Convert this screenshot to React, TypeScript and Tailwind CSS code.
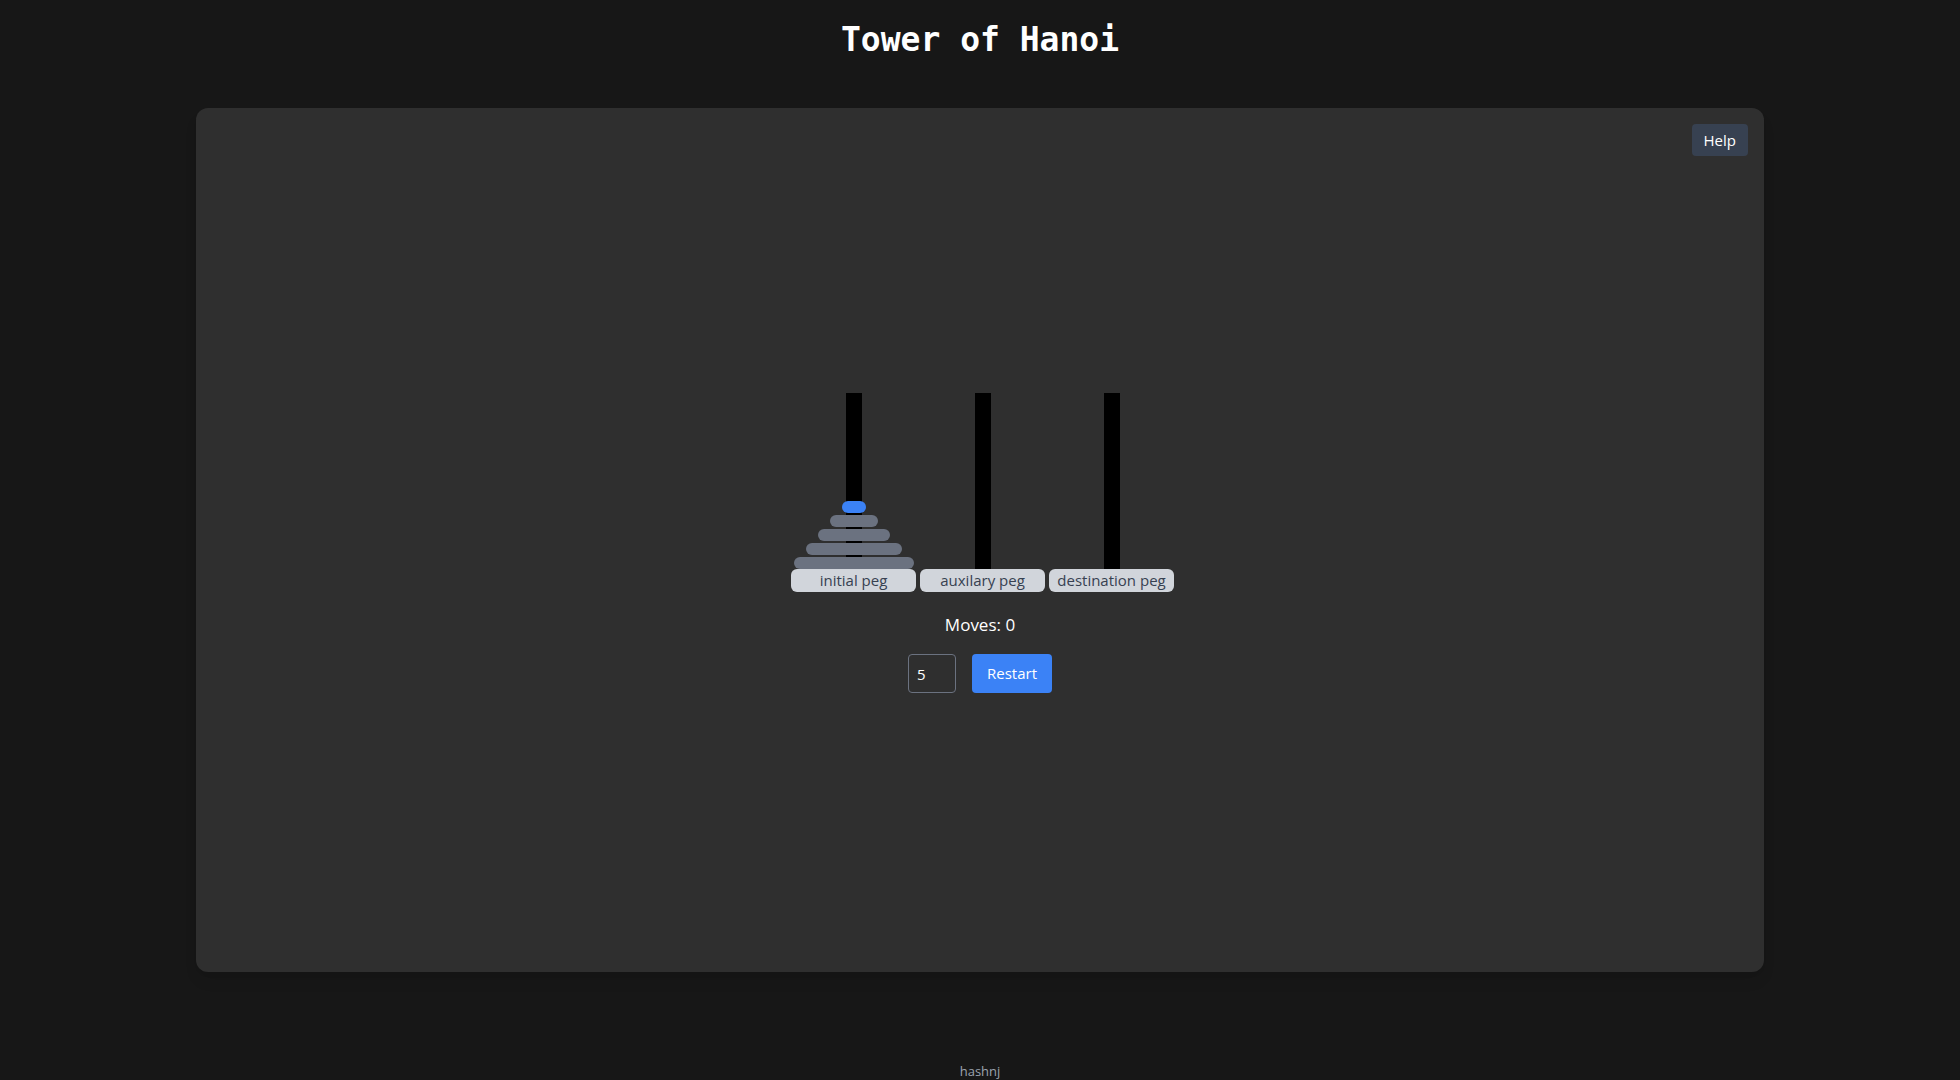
import React from "react";

const disks = [5, 4, 3, 2, 1];

export default function App() {
  const widths: Record<number, string> = {
    1: "w-[24px] bg-[#3b82f6]",
    2: "w-[48px] bg-[#6b7280]",
    3: "w-[72px] bg-[#6b7280]",
    4: "w-[96px] bg-[#6b7280]",
    5: "w-[120px] bg-[#6b7280]",
  };
  const pegs = [
    { label: "initial peg", disks },
    { label: "auxilary peg", disks: [] as number[] },
    { label: "destination peg", disks: [] as number[] },
  ];
  return (
    <div
      className="min-h-screen w-full bg-[#171717] flex flex-col items-center"
      style={{ fontFamily: '"Open Sans", "Noto Sans", sans-serif' }}
    >
      <h1
        className="pt-5 text-[33px] leading-[40px] font-bold text-white"
        style={{ fontFamily: '"DejaVu Sans Mono", "Liberation Mono", monospace' }}
      >
        Tower of Hanoi
      </h1>
      <div className="relative mt-12 w-[1568px] h-[864px] bg-[#2f2f2f] rounded-xl shadow-lg flex flex-col items-center justify-center pt-[6px]">
        <button className="absolute top-4 right-4 h-8 px-3 rounded bg-[#374151] text-white text-[15px]">
          Help
        </button>
        <div className="flex gap-1 pl-[5px]">
          {pegs.map((p) => (
            <div key={p.label} className="w-[125px] flex flex-col items-center">
              <div className="relative w-full h-[176px]">
                <div className="absolute left-1/2 -translate-x-1/2 top-0 bottom-0 w-4 bg-black" />
                <div className="absolute bottom-0 left-0 right-0 flex flex-col-reverse items-center gap-[2px]">
                  {p.disks.map((d) => (
                    <div key={d} className={`h-[12px] rounded-full ${widths[d]}`} />
                  ))}
                </div>
              </div>
              <div className="w-full h-[23px] bg-[#d1d5db] rounded-md text-center text-[15px] leading-[23px] text-[#374151]">
                {p.label}
              </div>
            </div>
          ))}
        </div>
        <div className="mt-[19px] text-[17px] leading-[28px] text-white">Moves: 0</div>
        <div className="mt-[15px] flex items-center gap-4">
          <input
            defaultValue="5"
            className="w-[48px] h-[39px] px-2 bg-transparent border border-[#6b7280] rounded-sm text-white text-[15px] outline-none"
          />
          <button className="w-[80px] h-[39px] rounded bg-[#3b82f6] text-white text-[15px]">
            Restart
          </button>
        </div>
      </div>
      <div className="mt-[89px] text-[13px] leading-[20px] text-[#9ca3af]">hashnj</div>
    </div>
  );
}
